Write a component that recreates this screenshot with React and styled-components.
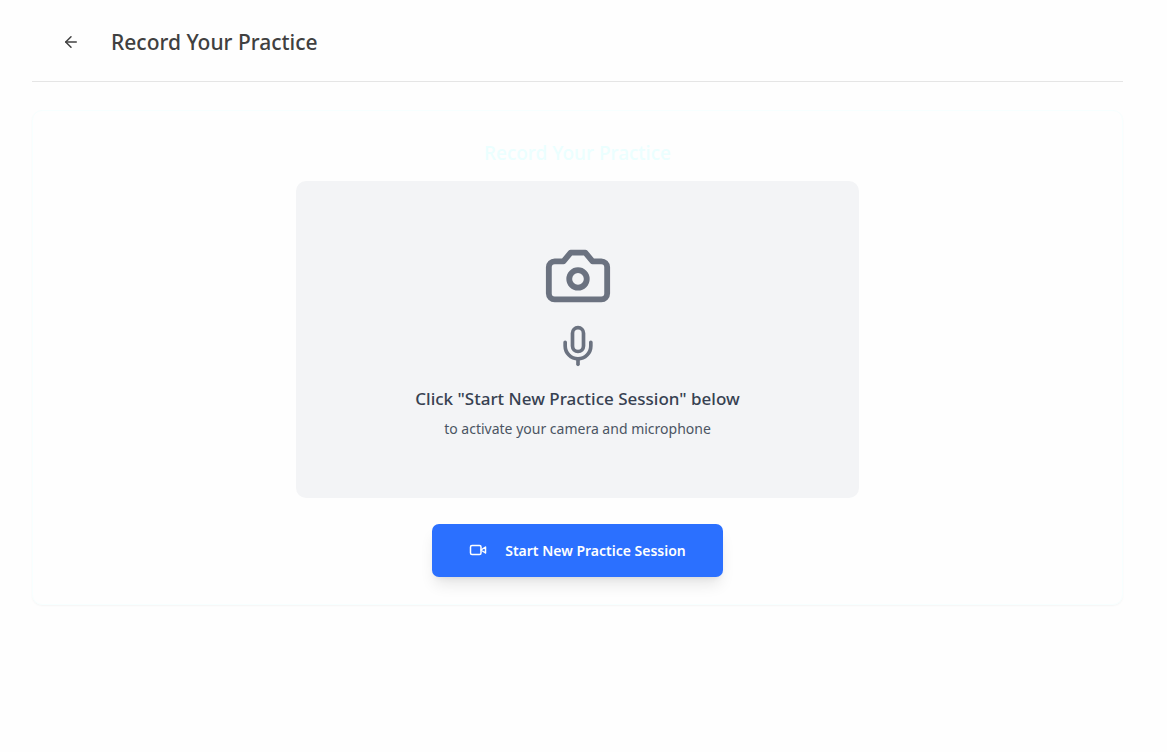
import React from "react";
import styled, { createGlobalStyle } from "styled-components";

const GlobalStyle = createGlobalStyle`
  *, *::before, *::after { box-sizing: border-box; }
  body {
    margin: 0;
    background: #fefefe;
    color: #404040;
    font-family: "Segoe UI", "Noto Sans", "Open Sans", sans-serif;
  }
  h1, h2, p { margin: 0; }
`;

const Page = styled.div`
  padding: 0 44px 32px 32px;
`;

const Header = styled.header`
  display: flex;
  align-items: center;
  gap: 16px;
  height: 82px;
  padding: 2px 0 0 15px;
  border-bottom: 1px solid #e5e5e5;
`;

const BackButton = styled.button`
  display: flex;
  align-items: center;
  justify-content: center;
  width: 48px;
  height: 40px;
  padding: 0;
  border: 0;
  border-radius: 6px;
  background: transparent;
  color: #404040;
  cursor: pointer;
`;

const PageTitle = styled.h1`
  font-size: 21px;
  line-height: 32px;
  font-weight: 500;
`;

const Card = styled.main`
  display: flex;
  flex-direction: column;
  align-items: center;
  margin-top: 28px;
  padding: 27px 24px;
  border: 1px solid #f7ffff;
  border-radius: 10px;
  box-shadow: 0 1px 2px rgba(0, 0, 0, 0.04);
`;

const CardTitle = styled.h2`
  margin-bottom: 13px;
  color: #ebffff;
  font-size: 19px;
  line-height: 30px;
  font-weight: 500;
`;

const Preview = styled.section`
  display: flex;
  flex-direction: column;
  align-items: center;
  justify-content: center;
  width: 100%;
  max-width: 563px;
  aspect-ratio: 16 / 9;
  padding-top: 4px;
  border-radius: 10px;
  background: #f3f4f6;
  color: #6b7280;
  text-align: center;
`;

const PreviewTitle = styled.p`
  margin-top: 16px;
  color: #374151;
  font-size: 17px;
  line-height: 30px;
  font-weight: 500;
`;

const PreviewText = styled.p`
  margin-top: 2px;
  color: #4b5563;
  font-size: 14px;
  line-height: 26px;
`;

const StartButton = styled.button`
  display: flex;
  align-items: center;
  justify-content: center;
  gap: 18px;
  height: 53px;
  margin-top: 26px;
  padding: 0 37px;
  border: 0;
  border-radius: 7px;
  background: #2b70ff;
  color: #fefefe;
  font-family: inherit;
  font-size: 14px;
  font-weight: 600;
  box-shadow: 0 10px 15px -3px rgba(0, 0, 0, 0.1), 0 4px 6px -4px rgba(0, 0, 0, 0.1);
  cursor: pointer;
`;

const Icon = styled.svg.attrs((p) => ({
  viewBox: "0 0 24 24",
  width: p.$size,
  height: p.$size,
  "aria-hidden": true,
}))`
  flex: none;
  fill: none;
  stroke: currentColor;
  stroke-width: 2;
  stroke-linecap: round;
  stroke-linejoin: round;
`;

const MicIcon = styled(Icon)`
  margin-top: 13px;
`;

export default function App() {
  return (
    <>
      <GlobalStyle />
      <Page>
        <Header>
          <BackButton type="button" aria-label="Go back">
            <Icon $size={18}>
              <path d="m12 19-7-7 7-7" />
              <path d="M19 12H5" />
            </Icon>
          </BackButton>
          <PageTitle>Record Your Practice</PageTitle>
        </Header>
        <Card>
          <CardTitle>Record Your Practice</CardTitle>
          <Preview>
            <Icon $size={70}>
              <path d="M14.5 4h-5L7 7H4a2 2 0 0 0-2 2v9a2 2 0 0 0 2 2h16a2 2 0 0 0 2-2V9a2 2 0 0 0-2-2h-3l-2.5-3z" />
              <circle cx="12" cy="13" r="3" />
            </Icon>
            <MicIcon $size={44}>
              <path d="M12 2a3 3 0 0 0-3 3v7a3 3 0 0 0 6 0V5a3 3 0 0 0-3-3Z" />
              <path d="M19 10v2a7 7 0 0 1-14 0v-2" />
              <path d="M12 19v3" />
            </MicIcon>
            <PreviewTitle>Click "Start New Practice Session" below</PreviewTitle>
            <PreviewText>to activate your camera and microphone</PreviewText>
          </Preview>
          <StartButton type="button">
            <Icon $size={18}>
              <path d="m22 8-6 4 6 4V8Z" />
              <rect x="2" y="6" width="14" height="12" rx="2" />
            </Icon>
            Start New Practice Session
          </StartButton>
        </Card>
      </Page>
    </>
  );
}
